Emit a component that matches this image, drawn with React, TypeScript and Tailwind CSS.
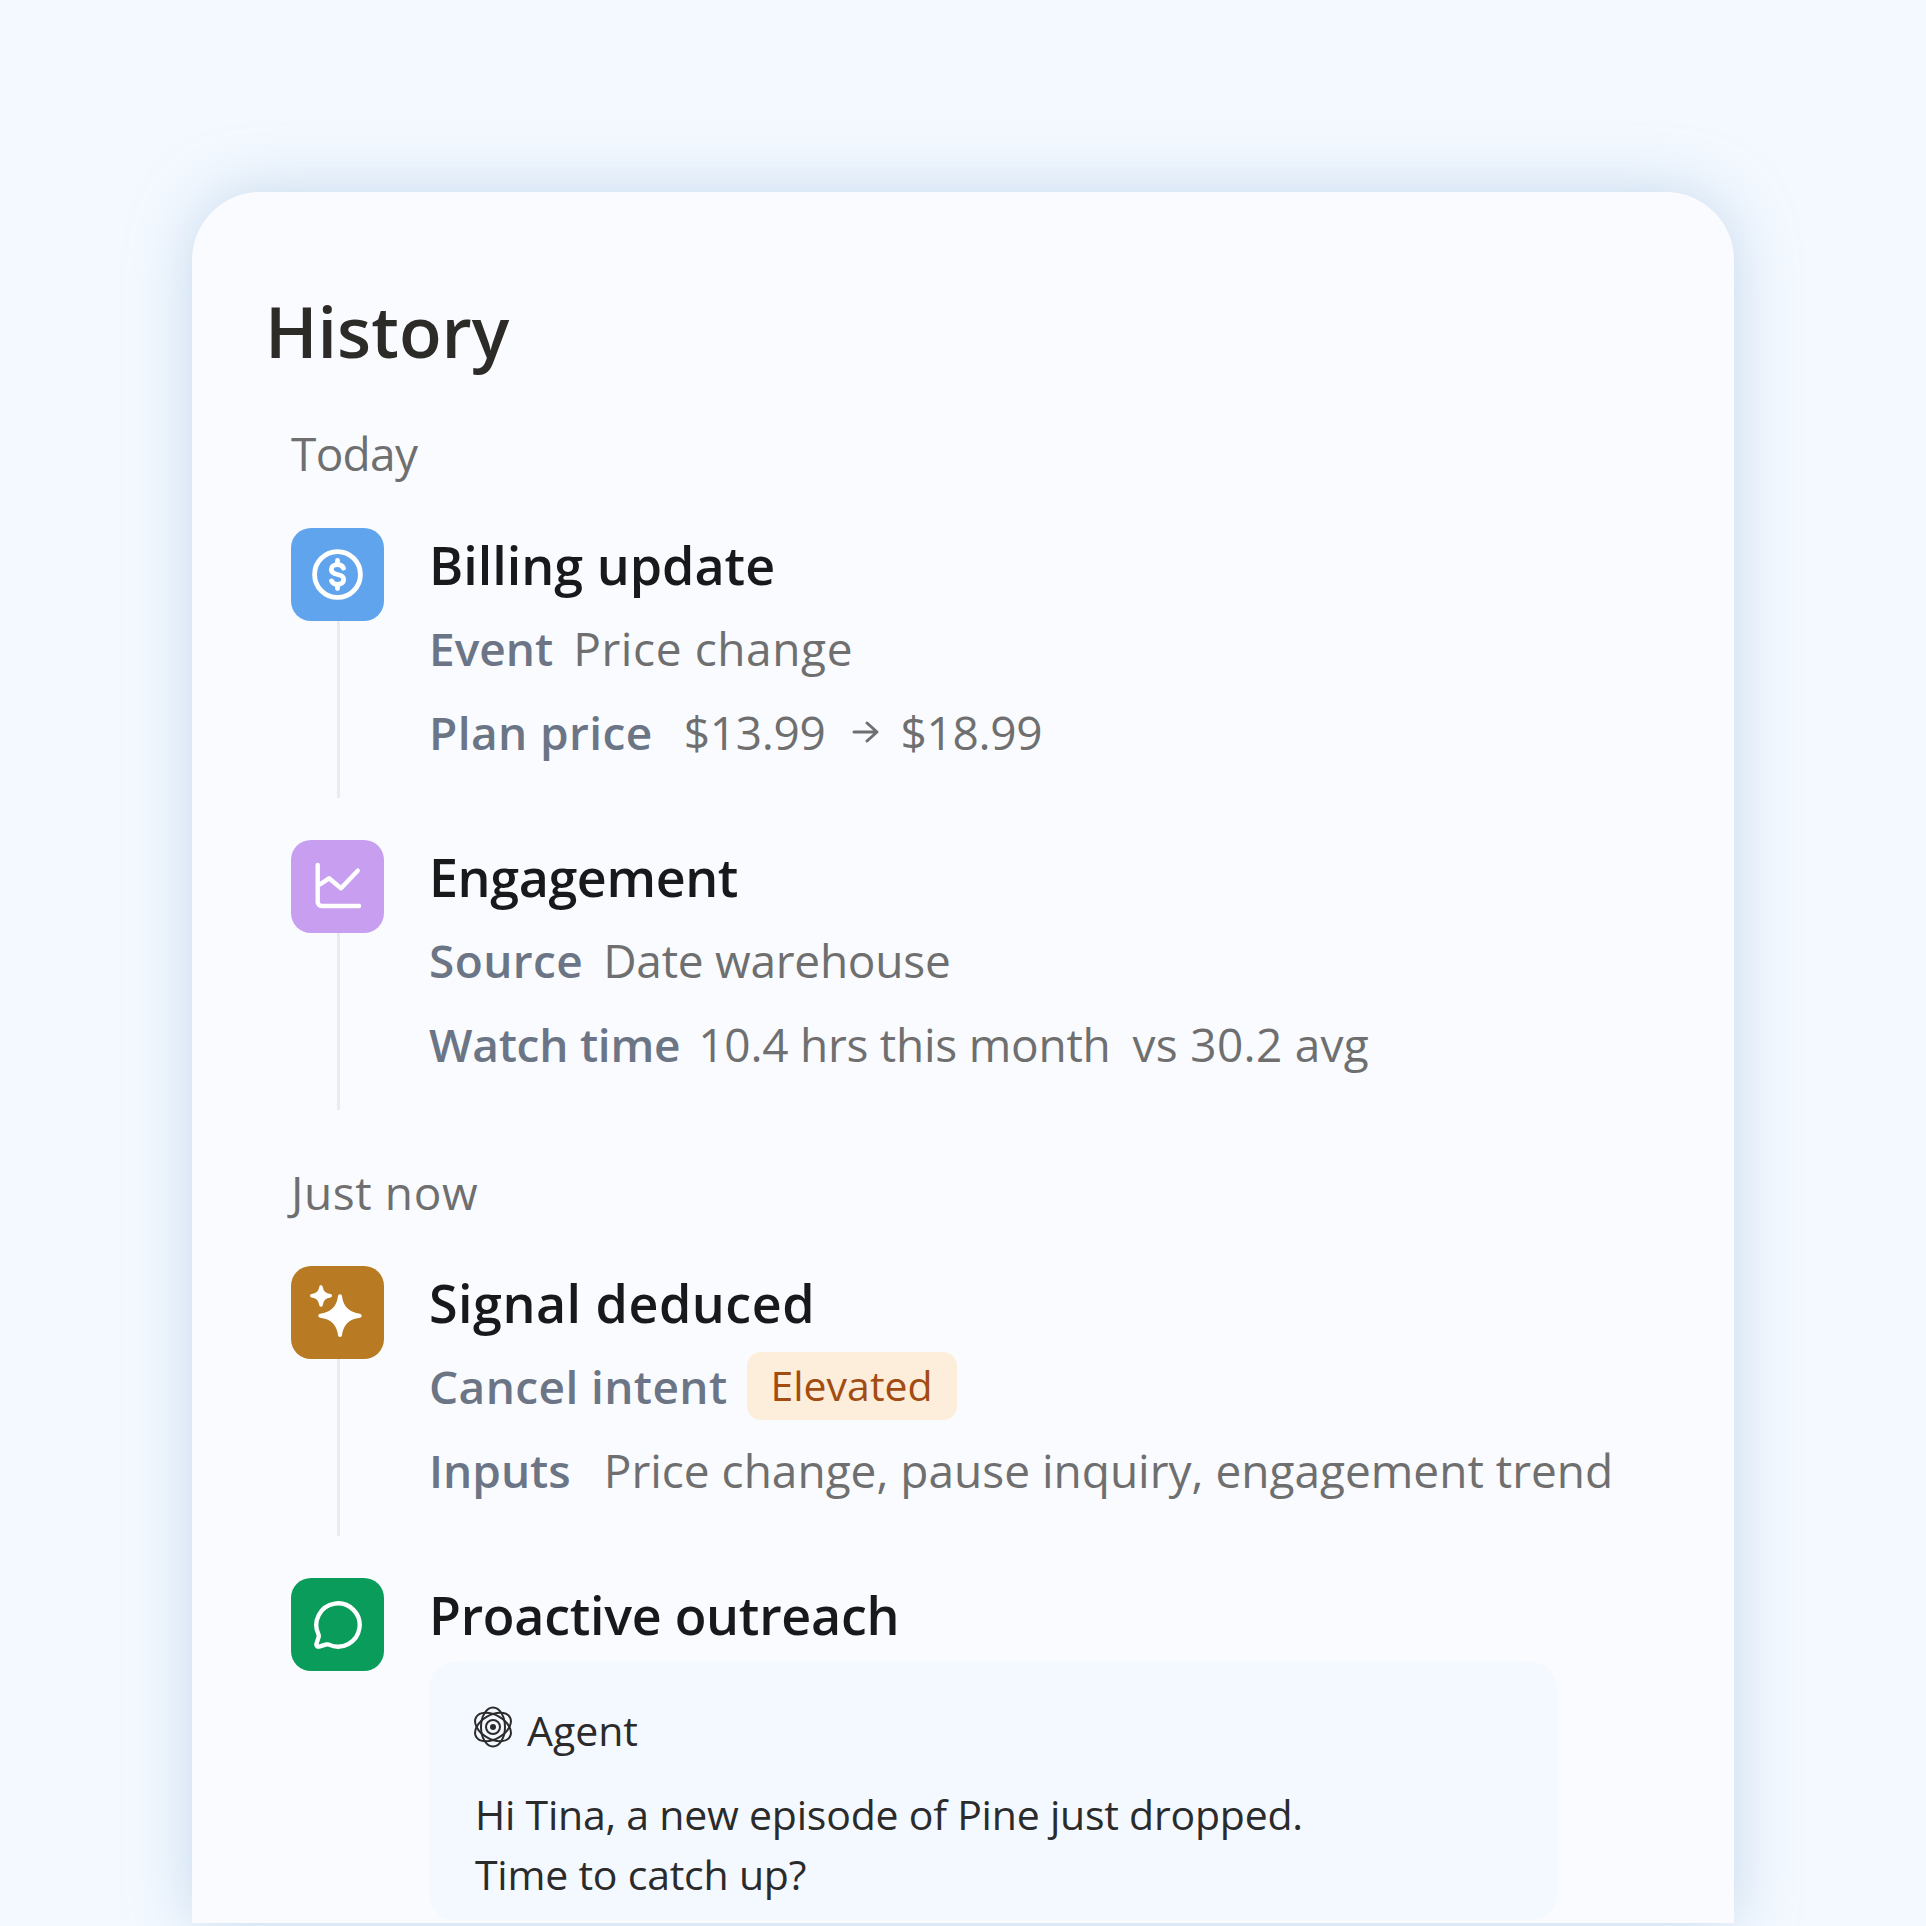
import type { ReactNode } from "react";

const ink = "#2b2b2b";

function DollarIcon() {
  return (
    <svg width="55" height="55" viewBox="0 0 24 24" fill="none" stroke="white" strokeWidth="2.1" strokeLinecap="round" strokeLinejoin="round">
      <circle cx="12" cy="12" r="10" />
      <path d="M14.6 9.2c-.4-1-1.4-1.5-2.6-1.5-1.5 0-2.7.8-2.7 2.1 0 1.3 1.1 1.9 2.7 2.2 1.6.3 2.7.9 2.7 2.2 0 1.3-1.2 2.1-2.7 2.1-1.2 0-2.2-.5-2.6-1.5" />
      <path d="M12 5.9V7.7M12 16.3v1.8" />
    </svg>
  );
}

function ChartIcon() {
  return (
    <svg width="93" height="93" viewBox="0 0 93 93" fill="none" stroke="white" strokeWidth="4.4" strokeLinecap="round" strokeLinejoin="round">
      <path d="M26.7 25V62a4 4 0 0 0 4 4H68" />
      <path d="M29 44.3 38 38.3 50 48.3 66.7 30.7" />
    </svg>
  );
}

function SparkIcon() {
  return (
    <svg width="93" height="93" viewBox="0 0 93 93" fill="white" stroke="white" strokeLinejoin="round">
      <path strokeWidth="4" d="M49 30.3Q51 47.7 68.7 49.7 51 51.7 49 69 47 51.7 29.3 49.7 47 47.7 49 30.3Z" />
      <path strokeWidth="3.4" d="M30 21Q31 28.7 39.3 29.7 31 30.7 30 39 29 30.7 20.7 29.7 29 28.7 30 21Z" />
    </svg>
  );
}

function ChatIcon() {
  return (
    <svg width="52" height="52" viewBox="0 0 24 24" fill="none" stroke="white" strokeWidth="2" strokeLinecap="round" strokeLinejoin="round">
      <path d="M2.992 16.342a2 2 0 0 1 .094 1.167l-1.065 3.29a1 1 0 0 0 1.236 1.168l3.413-.998a2 2 0 0 1 1.099.092 10 10 0 1 0-4.777-4.719" />
    </svg>
  );
}

function AgentIcon() {
  return (
    <svg className="-mt-[8px] -ml-[2px]" width="40" height="42" viewBox="0 0 40 42" fill="none" stroke={ink} strokeWidth="2">
      <ellipse cx="20" cy="21" rx="12" ry="19.5" />
      <ellipse cx="20" cy="21" rx="12" ry="19.5" transform="rotate(60 20 21)" />
      <ellipse cx="20" cy="21" rx="12" ry="19.5" transform="rotate(120 20 21)" />
      <circle cx="20" cy="21" r="7" />
      <circle cx="20" cy="21" r="3" fill={ink} stroke="none" />
    </svg>
  );
}

function Arrow() {
  return (
    <svg width="28" height="24" viewBox="0 0 28 24" fill="none" stroke="#6f6f6f" strokeWidth="3" strokeLinecap="round" strokeLinejoin="round">
      <path d="M2 12H25M15 3 25 12 15 21" />
    </svg>
  );
}

function Label({ className = "", children }: { className?: string; children: ReactNode }) {
  return <span className={`font-semibold text-[#6b7585] ${className}`}>{children}</span>;
}

function Row({ children }: { children: ReactNode }) {
  return <div className="flex h-[84px] items-center whitespace-nowrap text-[46px] text-[#6f6f6f]">{children}</div>;
}

function Item({ color, icon, title, titleClass = "", line = true, children }: {
  color: string;
  icon: ReactNode;
  title: string;
  titleClass?: string;
  line?: boolean;
  children: ReactNode;
}) {
  return (
    <div className="flex h-[312px] gap-[45px]">
      <div className="flex w-[93px] shrink-0 flex-col items-center">
        <div className={`flex size-[93px] items-center justify-center rounded-[20px] ${color}`}>{icon}</div>
        {line && <div className="ml-[1px] h-[177px] w-[3px] bg-[#e8ebf0]" />}
      </div>
      <div>
        <h2 className={`h-[78px] text-[52px] leading-[73px] font-semibold whitespace-nowrap text-[#18191b] ${titleClass}`}>{title}</h2>
        {children}
      </div>
    </div>
  );
}

export default function App() {
  return (
    <div className="h-[1926px] w-[1926px] overflow-hidden bg-[#f4f9ff] pt-[192px] pl-[192px] font-['Open_Sans',sans-serif]">
      <div className="h-[1731px] w-[1542px] rounded-t-[68px] bg-[#f9fbff] pt-[97px] pl-[73px] shadow-[0_0_60px_rgba(149,185,219,0.5)]">
        <h1 className="h-[84px] text-[70px] leading-[84px] font-semibold text-[#2d2b28]">History</h1>
        <div className="ml-[26px]">
          <div className="mt-[52px] h-[56px] text-[46px] leading-[56px] tracking-[-0.7px] text-[#6f6f6f]">Today</div>
          <div className="mt-[47px]">
            <Item color="bg-[#5fa4ec]" icon={<DollarIcon />} title="Billing update">
              <Row>
                <Label>Event</Label>
                <span className="ml-[20px] tracking-[0.6px]">Price change</span>
              </Row>
              <Row>
                <Label className="tracking-[0.4px]">Plan price</Label>
                <span className="ml-[31px] tracking-[-0.3px]">$13.99</span>
                <span className="mr-[20px] ml-[27px]"><Arrow /></span>
                <span className="tracking-[-0.3px]">$18.99</span>
              </Row>
            </Item>
            <Item color="bg-[#c89ff0]" icon={<ChartIcon />} title="Engagement" titleClass="tracking-[-0.4px]">
              <Row>
                <Label className="tracking-[0.4px]">Source</Label>
                <span className="ml-[20px] tracking-[-0.25px]">Date warehouse</span>
              </Row>
              <Row>
                <Label className="tracking-[-0.25px]">Watch time</Label>
                <span className="ml-[18px] tracking-[-0.25px]">10.4 hrs this month</span>
                <span className="ml-[22px] tracking-[0.3px]">vs 30.2 avg</span>
              </Row>
            </Item>
          </div>
          <div className="mt-[12px] h-[56px] text-[46px] leading-[56px] tracking-[0.6px] text-[#6f6f6f]">Just now</div>
          <div className="mt-[46px]">
            <Item color="bg-[#b87a22]" icon={<SparkIcon />} title="Signal deduced" titleClass="tracking-[0.5px]">
              <Row>
                <Label className="tracking-[0.4px]">Cancel intent</Label>
                <span className="ml-[19px] flex h-[68px] w-[210px] items-center justify-center rounded-[14px] bg-[#fdeedb] text-[41px] text-[#a34c12]">Elevated</span>
              </Row>
              <Row>
                <Label>Inputs</Label>
                <span className="ml-[33px]">Price change, pause inquiry, engagement trend</span>
              </Row>
            </Item>
            <Item color="bg-[#0a9c5a]" icon={<ChatIcon />} title="Proactive outreach" titleClass="tracking-[-0.28px]" line={false}>
              <div className="mt-[6px] h-[258px] w-[1128px] rounded-[26px] bg-[#f4f9ff] pt-[44px] pl-[46px] text-[41px] text-[#2b2b2b]">
                <div className="flex h-[50px] items-center gap-[14px]">
                  <AgentIcon />
                  <span>Agent</span>
                </div>
                <p className="mt-[28px] leading-[60px] tracking-[-0.22px]">Hi Tina, a new episode of Pine just dropped.<br />Time to catch up?</p>
              </div>
            </Item>
          </div>
        </div>
      </div>
    </div>
  );
}
